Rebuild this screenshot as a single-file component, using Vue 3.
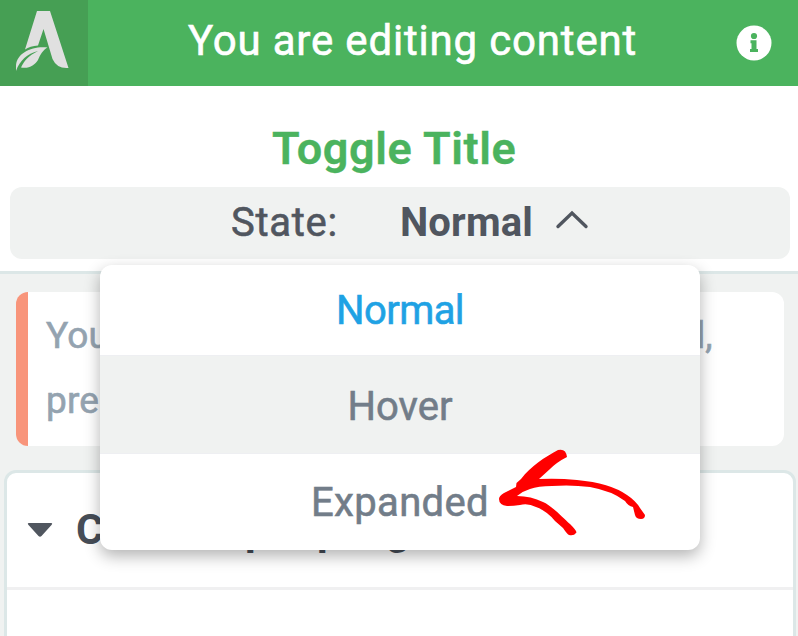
<script setup>
const states = [
  { label: 'Normal', mod: 'current' },
  { label: 'Hover', mod: 'hovered' },
  { label: 'Expanded', mod: 'last' },
]
</script>

<template>
  <div class="panel">
    <header class="header">
      <div class="logo">
        <svg width="88" height="86" viewBox="0 0 88 86">
          <path fill="#e0e0e0" d="M37 11H50L68.500 68Q57 69 52.500 59L43.500 29L38 45.500Q30 46 25 49.500Z" />
          <path fill="#e0e0e0" d="M47.500 47.500C34 45.500 16 52 16 66.500V71C20 60 27 54 38 51C28 56 24 61 21 67.500C29 69 35 65 38 60C40 55 43 50 47.500 47.500Z" />
        </svg>
      </div>
      <div class="heading"><span>You are editing content</span></div>
      <svg class="info" width="36" height="36" viewBox="0 0 36 36">
        <circle cx="18" cy="18" r="17.500" fill="#fff" />
        <circle cx="18" cy="11" r="3.100" fill="#4bb35e" />
        <path fill="#4bb35e" d="M14.500 15.300H20.500V24H22V27H14V24H15.500V18.300H14.500Z" />
      </svg>
    </header>

    <section class="top">
      <h1 class="title"><span>Toggle Title</span></h1>
      <div class="state">
        <span class="state-label">State:</span>
        <span class="state-value">Normal</span>
        <svg class="chevron" width="34" height="22" viewBox="0 0 34 22">
          <path d="M3 17.500L17 4L31 17.500" fill="none" stroke="#50565f" stroke-width="3.400" stroke-linecap="round" />
        </svg>
      </div>
    </section>

    <main class="body">
      <div class="notice">
        <div class="line"><span>You</span><span class="tail">d,</span></div>
        <div class="line"><span>pre</span></div>
      </div>
      <div class="card">
        <div class="card-head">
          <svg width="26" height="16" viewBox="0 0 26 16">
            <path d="M1.500 1H24.500Q26 1.500 24.500 3L14.500 14Q13 15.500 11.500 14L1.500 3Q0 1.500 1.500 1Z" fill="#50565f" />
          </svg>
          <div class="card-title"><span>C</span><span>p</span><span>p</span><span>g</span></div>
        </div>
      </div>
    </main>

    <div class="menu">
      <div v-for="s in states" :key="s.label" class="item" :class="s.mod"><span>{{ s.label }}</span></div>
    </div>
    <svg class="arrow" width="150" height="90" viewBox="0 0 150 90">
      <path fill="#f00" d="M1 49Q1 46 6 43L18 37L18.500 33L23 29C33 16 47 7 60 0Q68 -2 69 7Q59 12 52 19L41 29Q60 28 79 30Q112 33 129 45Q138 51 142 58L147 65Q147 69 143 69Q138 69 137 65L135 57Q130 56 127 51Q114 41 92 37Q73 34.500 54 36Q40 36 32 39Q25 41 19 46Q33 46 45 52C53 55 65 68 72 74Q80 82 78 83Q76 86 71 85Q69 84 65 78L57 71Q49 61 38 57Q30 53 22 55Q15 56 9 56Q1 55 1 49Z" />
    </svg>
  </div>
</template>

<style>
body { margin: 0; overflow: hidden; }
</style>

<style scoped>
.panel {
  position: relative;
  width: 798px;
  height: 636px;
  overflow: hidden;
  display: flex;
  flex-direction: column;
  background: #f0f2f1;
  font-family: Roboto, "Liberation Sans", sans-serif;
  color: #50565f;
  white-space: nowrap;
}
.header {
  height: 86px;
  flex: none;
  display: flex;
  align-items: center;
  background: #4bb35e;
  color: #fff;
}
.logo { width: 88px; height: 86px; background: #469f54; }
.logo svg { display: block; }
.heading {
  flex: 1;
  padding-left: 100px;
  font-size: 42px;
  line-height: 82px;
  height: 86px;
  letter-spacing: 0.820px;
  -webkit-text-stroke: 0.600px currentColor;
}
.info { margin-right: 26px; }
.top {
  height: 185px;
  flex: none;
  padding: 37px 8px 0 10px;
  box-sizing: border-box;
  background: #fff;
}
.title {
  margin: 0;
  height: 64px;
  padding-left: 262px;
  font-size: 45px;
  line-height: 52px;
  font-weight: 600;
  letter-spacing: 0.580px;
  -webkit-text-stroke: 0.400px currentColor;
  color: #4bb35e;
}
.state {
  display: flex;
  height: 72px;
  padding-left: 221px;
  border-radius: 12px;
  background: #f0f2f1;
  font-size: 40px;
  line-height: 72px;
}
.state-label { width: 169px; letter-spacing: 0.700px; -webkit-text-stroke: 0.600px currentColor; }
.state-value { width: 155px; font-weight: 700; letter-spacing: 0.150px; }
.chevron { margin-top: 22px; }
.body {
  flex: 1;
  box-sizing: border-box;
  border-top: 3px solid #dce7e7;
  padding: 18px 2px 0 4px;
}
.notice {
  height: 154px;
  margin: 0 12px;
  box-sizing: border-box;
  padding: 12px 0 0 18px;
  border-left: 12px solid #f8957b;
  border-radius: 12px;
  background: #fff;
  color: #94a3b0;
  font-size: 37px;
}
.line {
  display: flex;
  height: 65px;
  line-height: 64px;
  letter-spacing: 0.200px;
  -webkit-text-stroke: 0.600px currentColor;
}
.tail { margin-left: 575px; }
.card {
  height: 190px;
  margin-top: 24px;
  border: 3px solid #dce7e7;
  border-radius: 12px;
  background: #fff;
}
.card-head {
  height: 114px;
  display: flex;
  align-items: center;
  padding-left: 20px;
  gap: 23px;
  border-bottom: 3px solid #f0f0f1;
}
.card-title {
  display: grid;
  grid-template-columns: 169px 72px 69px auto;
  font-size: 42px;
  line-height: 48px;
  font-weight: 700;
  color: #464d57;
}
.menu {
  position: absolute;
  left: 100px;
  top: 265px;
  width: 600px;
  height: 285px;
  display: grid;
  grid-template-rows: 90px 99px 96px;
  border-radius: 12px;
  overflow: hidden;
  background: #fff;
  box-shadow: 0 6px 16px rgba(0, 0, 0, 0.3);
}
.item {
  display: flex;
  align-items: center;
  justify-content: center;
  font-size: 40px;
  letter-spacing: 0.350px;
  -webkit-text-stroke: 0.600px currentColor;
  color: #727d89;
}
.current { color: #1fa2e4; letter-spacing: -0.600px; }
.hovered {
  padding-top: 3px;
  letter-spacing: 0;
  background: #f0f2f1;
  border-top: 1px solid #eeeff2;
  border-bottom: 1px solid #eeeff2;
}
.arrow { position: absolute; left: 498px; top: 450px; overflow: visible; }
</style>
